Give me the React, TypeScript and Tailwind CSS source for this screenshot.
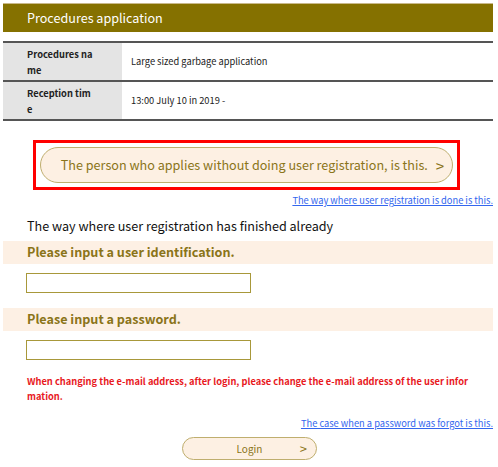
import React from "react";

export default function App() {
  return (
    <div className="w-[498px] h-[467px] bg-white overflow-hidden" style={{ fontFamily: '"Noto Sans CJK JP", "Noto Sans", sans-serif' }}>
      <div className="pl-[3px] pr-[5px] pt-[3px]">
        <div className="h-[29px] bg-[#857100] border-t border-[#c9b98a] flex items-center pl-[24px] text-white text-[12.6px]">
          Procedures application
        </div>
        <div className="mt-[9px] border-t-2 border-[#555]">
          <div className="flex h-[39px] border-b-2 border-[#555]">
            <div className="w-[119px] bg-[#e4e4e4] pl-[24px] pr-2 flex items-center text-[9.3px] font-bold leading-[16px] text-[#222]">Procedures na<br />me</div>
            <div className="flex-1 pl-[9px] flex items-center text-[9.3px] text-[#222]">Large sized garbage application</div>
          </div>
          <div className="flex h-[39px] border-b-2 border-[#555]">
            <div className="w-[119px] bg-[#e4e4e4] pl-[24px] pr-2 flex items-center text-[9.3px] font-bold leading-[16px] text-[#222]">Reception tim<br />e</div>
            <div className="flex-1 pl-[9px] flex items-center text-[9.3px] text-[#222]">13:00 July 10 in 2019 -</div>
          </div>
        </div>
        <div className="mt-[19px] ml-[30px] w-[427px] h-[50px] border-[3px] border-[#f00] p-[4px]">
          <div className="h-full rounded-full bg-[#fdf0e3] border border-[#bfae6e] flex items-center justify-center whitespace-nowrap text-[12.6px] text-[#8a7418]">
            <span className="ml-[12px]">The person who applies without doing user registration, is this.</span>
            <span className="ml-[8px] text-[15px] leading-none">&gt;</span>
          </div>
        </div>
        <div className="mt-[3px] text-right text-[9.3px] leading-[14px]">
          <span className="text-[#3366ee] underline">The way where user registration is done is this.</span>
        </div>
        <div className="mt-[10px] pl-[24px] text-[12.6px] text-[#111] leading-[18px]">The way where user registration has finished already</div>
        <div className="mt-[6px] h-[23px] bg-[#fdf0e4] pl-[24px] flex items-center text-[12.6px] font-bold text-[#8a7418]">Please input a user identification.</div>
        <div className="mt-[9px] pl-[23px]">
          <div className="w-[225px] h-[20px] border border-[#a8983a]" />
        </div>
        <div className="mt-[15px] h-[23px] bg-[#fdf0e4] pl-[24px] flex items-center text-[12.6px] font-bold text-[#8a7418]">Please input a password.</div>
        <div className="mt-[9px] pl-[23px]">
          <div className="w-[225px] h-[20px] border border-[#a8983a]" />
        </div>
        <div className="mt-[14px] pl-[24px] text-[9.3px] font-bold leading-[15px] text-[#e8191e] whitespace-nowrap">
          When changing the e-mail address, after login, please change the e-mail address of the user infor<br />mation.
        </div>
        <div className="mt-[12px] text-right text-[9.3px] leading-[14px]">
          <span className="text-[#3366ee] underline">The case when a password was forgot is this.</span>
        </div>
        <div className="mt-[7px] pl-[179px]">
          <div className="w-[135px] h-[23px] rounded-full bg-[#fdf0e3] border border-[#bfae6e] flex items-center justify-center relative text-[10px] text-[#8a7418]">
            <span>Login</span>
            <span className="absolute right-[9px] text-[13px] leading-none top-[4px]">&gt;</span>
          </div>
        </div>
      </div>
    </div>
  );
}
